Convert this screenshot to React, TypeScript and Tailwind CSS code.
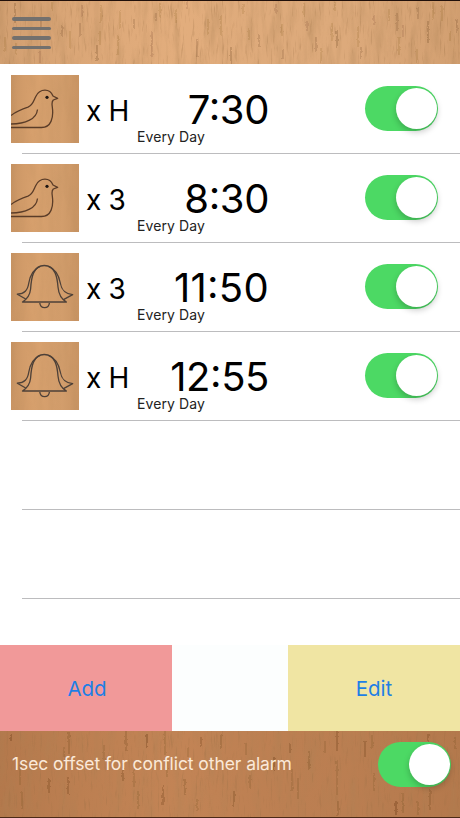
import { useState } from 'react';
import clsx from 'clsx';

type Alarm = {
  id: number;
  icon: 'bird' | 'bell';
  repeat: string;
  time: string;
  days: string;
};

const alarms: Alarm[] = [
  { id: 1, icon: 'bird', repeat: 'x H', time: '7:30', days: 'Every Day' },
  { id: 2, icon: 'bird', repeat: 'x 3', time: '8:30', days: 'Every Day' },
  { id: 3, icon: 'bell', repeat: 'x 3', time: '11:50', days: 'Every Day' },
  { id: 4, icon: 'bell', repeat: 'x H', time: '12:55', days: 'Every Day' },
];

// Pores in the wood: x, y, length
const headerGrain = [
  [15, 2, 20], [5, 36, 14], [16, 42, 12], [41, 16, 10], [40, 50, 12], [52, 1, 9],
  [62, 24, 12], [70, 30, 18], [82, 3, 12], [80, 22, 14], [101, 4, 18], [100, 30, 14],
  [97, 44, 16], [120, 10, 18], [118, 34, 20], [134, 18, 10], [152, 30, 26], [160, 2, 14],
  [156, 12, 8], [176, 8, 14], [187, 1, 7], [197, 38, 18], [208, 18, 16], [221, 14, 20],
  [231, 46, 16], [243, 3, 10], [249, 27, 12], [259, 34, 12], [276, 3, 10], [282, 23, 12],
  [283, 48, 10], [304, 2, 14], [307, 20, 10], [316, 36, 15], [321, 48, 14], [332, 22, 18],
  [337, 30, 17], [335, 2, 8], [358, 26, 20], [361, 46, 12], [374, 14, 10], [389, 8, 12],
  [397, 12, 18], [399, 36, 18], [403, 24, 12], [418, 6, 12], [417, 48, 14], [433, 2, 16],
  [428, 20, 22], [442, 4, 16], [450, 30, 10], [457, 18, 14],
];

const footerGrain = [
  [11, 2, 8], [20, 34, 20], [22, 60, 18], [49, 48, 14], [69, 1, 22], [64, 16, 10],
  [68, 46, 18], [104, 14, 15], [126, 0, 20], [123, 32, 18], [134, 38, 18], [138, 60, 18],
  [147, 4, 14], [165, 0, 24], [167, 30, 16], [163, 54, 20], [185, 48, 16], [188, 16, 10],
  [201, 6, 10], [197, 68, 12], [221, 3, 14], [234, 60, 16], [246, 12, 12], [250, 44, 14],
  [274, 26, 14], [292, 38, 22], [298, 48, 20], [290, 12, 10], [309, 20, 18], [325, 10, 12],
  [337, 0, 20], [337, 30, 34], [338, 70, 14], [365, 10, 16], [372, 4, 14], [374, 42, 18],
  [396, 70, 14], [403, 62, 20], [418, 70, 14], [428, 2, 14], [430, 58, 20], [455, 6, 12],
];

function Wood({
  id,
  grain,
  color,
  stroke,
}: {
  id: string;
  grain?: number[][];
  color: string;
  stroke: string;
}) {
  return (
    <svg className="absolute inset-0 h-full w-full" aria-hidden="true">
      <defs>
        <linearGradient id={`${id}-base`}>
          <stop offset="0" stopColor="#7a4a20" stopOpacity="0.14" />
          <stop offset="0.4" stopColor="#ffb070" stopOpacity="0.08" />
          <stop offset="0.75" stopColor="#7a4a20" stopOpacity="0.03" />
          <stop offset="1" stopColor="#7a4a20" stopOpacity="0.14" />
        </linearGradient>
        <filter id={`${id}-fiber`} x="0" y="0" width="100%" height="100%">
          <feTurbulence type="fractalNoise" baseFrequency="0.12 0.02" numOctaves="5" seed="11" />
          <feColorMatrix values="0 0 0 0 0.4  0 0 0 0 0.22  0 0 0 0 0.09  1.6 0 0 0 -0.68" />
        </filter>
        <filter id={`${id}-pores`} x="0" y="0" width="100%" height="100%">
          <feTurbulence type="fractalNoise" baseFrequency="0.45 0.05" numOctaves="3" seed="4" />
          <feColorMatrix values="0 0 0 0 0.32  0 0 0 0 0.16  0 0 0 0 0.06  4 0 0 0 -2.4" />
        </filter>
        <filter id={`${id}-rough`} filterUnits="userSpaceOnUse" x="0" y="0" width="460" height="90">
          <feTurbulence type="fractalNoise" baseFrequency="0.3" numOctaves="2" seed="2" result="noise" />
          <feDisplacementMap in="SourceGraphic" in2="noise" scale="3" xChannelSelector="R" yChannelSelector="G" />
        </filter>
      </defs>
      <rect width="100%" height="100%" fill={color} />
      <rect width="100%" height="100%" fill={`url(#${id}-base)`} />
      <rect width="100%" height="100%" filter={`url(#${id}-fiber)`} opacity={grain ? 0.42 : 0.2} />
      {grain && (
        <>
          <rect width="100%" height="100%" filter={`url(#${id}-pores)`} opacity="0.3" />
          <g fill="none" stroke={stroke} filter={`url(#${id}-rough)`}>
            {grain.map(([x, y, length], i) => (
              <path
                key={i}
                d={`M${x} ${y}v${length}`}
                strokeWidth={i % 4 === 0 ? 1 : 0.8}
                opacity={i % 3 === 0 ? 0.5 : 0.32}
              />
            ))}
          </g>
        </>
      )}
    </svg>
  );
}

function Bird() {
  return (
    <svg viewBox="0 0 68 68" className="relative h-full w-full" fill="none" stroke="#5a3c28" strokeWidth="1.3" strokeLinejoin="round">
      <path d="M0 40.5C6 36 12 33.8 17 32.2C22 30.2 22.5 26 24.8 21.5C27 17 30 15.2 34 15.2C38 15.2 40.5 17.5 42 21L46.6 23.4L42.3 25C40.3 27 41 29 41.3 32C42.8 43 40 52.5 30.5 52.5H0" />
      <path d="M26.5 34.5C26 39 23 43 18.5 45.2C13 48 7 49 0 49" />
      <circle cx="36" cy="22.3" r="1.6" fill="#1c1512" stroke="none" />
    </svg>
  );
}

function Bell() {
  return (
    <svg viewBox="0 0 68 68" className="relative h-full w-full" fill="none" stroke="#4d4038" strokeWidth="1.3" strokeLinejoin="round">
      <path d="M11.5 49C17 45.5 19 42 19.6 36C20.3 25 22 12.5 33.3 12.5C44.5 12.5 46.3 25 47 34C47.7 42 50 46 55.5 49Z" />
      <path d="M29 13.4C22 16.5 19 23 17.8 30C16.6 37.5 13.5 40.6 6.3 41.2L14.7 46" />
      <path d="M37.6 13.4C45 16.5 48 23 49.3 30C50.8 38 54.5 41 61.7 41.7L52 46.8" />
      <path d="M28.8 50C29.5 56.2 37.7 56.2 38.4 50" />
    </svg>
  );
}

function Toggle({ label }: { label: string }) {
  const [on, setOn] = useState(true);

  return (
    <button
      role="switch"
      aria-checked={on}
      aria-label={label}
      onClick={() => setOn(!on)}
      className={clsx(
        'flex h-[44.5px] w-[73px] shrink-0 items-center rounded-full px-[1.5px]',
        on ? 'justify-end bg-[#4cd964]' : 'justify-start bg-gray-200',
      )}
    >
      <span className="size-[41px] rounded-full bg-white shadow-[0_3px_6px_rgba(0,0,0,0.22)]" />
    </button>
  );
}

function AlarmRow({ alarm }: { alarm: Alarm }) {
  const [hours, minutes] = alarm.time.split(':');

  return (
    <li className="flex h-[89px] shrink-0 flex-col">
      <div className="flex flex-1 items-start pl-[11px] pr-[22px] pt-[10px]">
        <div className="relative size-[68px] shrink-0 overflow-hidden">
          <Wood id={`tile-${alarm.id}`} color="#d5a06e" stroke="#8a5a30" />
          {alarm.icon === 'bird' ? <Bird /> : <Bell />}
        </div>
        <div className="ml-[7px] w-[50px] shrink-0 whitespace-nowrap pt-[16px] text-[28px] leading-[40px] tracking-[-0.3px]">
          {alarm.repeat}
        </div>
        <div className="flex w-[133px] shrink-0 flex-col pt-[15px]">
          <span
            className={clsx(
              'text-right text-[40px] leading-[40px] font-[370]',
              hours === '11' ? 'tracking-[0.3px]' : 'tracking-[-0.4px]',
            )}
          >
            {hours}
            <span className="relative -top-[4px]">:</span>
            {minutes}
          </span>
          <span className="-mt-[2px] pl-px text-[14px] leading-[18px] text-[#222] tracking-[0.1px]">{alarm.days}</span>
        </div>
        <div className="ml-auto pt-[11px]">
          <Toggle label={`Alarm ${alarm.time}`} />
        </div>
      </div>
      <div className="ml-[22px] h-px bg-[#bcbcbe]" />
    </li>
  );
}

export default function App() {
  return (
    <div className="flex h-[818px] w-[460px] flex-col overflow-hidden bg-white font-['Inter',sans-serif] text-black">
      <header className="relative flex h-[64px] shrink-0 border-t border-[#21100a] pl-[12px] pt-[16px]">
        <Wood id="header" grain={headerGrain} color="#e0ad7e" stroke="#704622" />
        <button aria-label="Menu" className="relative flex h-[32px] w-[40px] flex-col justify-between">
          <span className="h-[3.5px] w-[39px] rounded-full bg-[#73706d]" />
          <span className="h-[3.5px] w-[39px] rounded-full bg-[#73706d]" />
          <span className="h-[3.5px] w-[39px] rounded-full bg-[#73706d]" />
          <span className="h-[3.5px] w-[39px] rounded-full bg-[#73706d]" />
        </button>
      </header>

      <ul className="flex h-[581px] shrink-0 flex-col overflow-hidden pt-px">
        {alarms.map((alarm) => (
          <AlarmRow key={alarm.id} alarm={alarm} />
        ))}
        {/* Empty rows */}
        <li className="ml-[22px] h-[89px] shrink-0 border-b border-[#bcbcbe]" />
        <li className="ml-[22px] h-[89px] shrink-0 border-b border-[#bcbcbe]" />
      </ul>

      <div className="flex h-[86px] shrink-0 bg-[#fcfefe] text-[20.5px] text-[#1f7fe5]">
        <button className="w-[172px] bg-[#f19999] pl-[2px] pt-[2px]">Add</button>
        <div className="flex-1" />
        <button className="w-[172px] bg-[#f0e5a3] pt-[2px]">Edit</button>
      </div>

      <footer className="relative flex h-[87px] shrink-0 items-start justify-between border-b border-[#4b2a18] pl-[12px] pr-[9px] pt-[11px]">
        <Wood id="footer" grain={footerGrain} color="#bd8053" stroke="#4b2610" />
        <span className="relative pt-[9px] text-[17.5px] leading-[26px] tracking-[-0.08px] text-[#fbe9d9]">
          1sec offset for conflict other alarm
        </span>
        <div className="relative">
          <Toggle label="Offset conflicting alarms" />
        </div>
      </footer>
    </div>
  );
}
